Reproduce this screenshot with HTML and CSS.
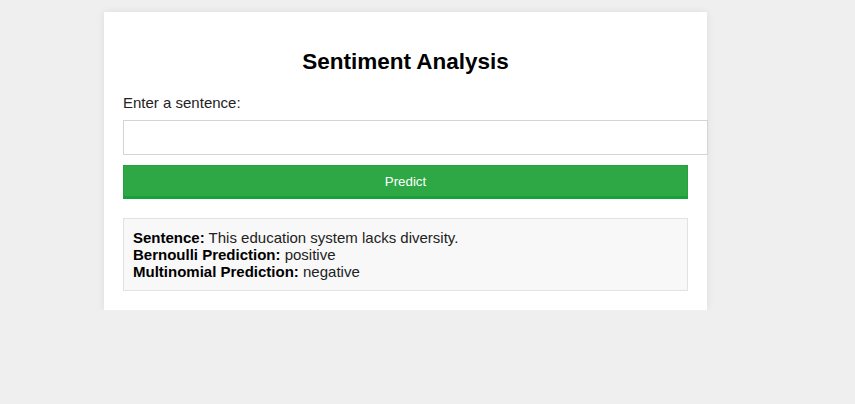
FILE: index.html
```html
<!DOCTYPE html>
<html lang="en">
<head>
<meta charset="utf-8">
<title>Sentiment Analysis</title>
<link rel="stylesheet" href="styles.css">
</head>
<body>
<div class="page">
  <div class="card">
    <h2 class="title">Sentiment Analysis</h2>
    <form class="form">
      <label class="label" for="sentence">Enter a sentence:</label>
      <input class="input" type="text" id="sentence" name="sentence">
      <button class="btn" type="button">Predict</button>
    </form>
    <div class="result">
      <div><strong>Sentence:</strong> This education system lacks diversity.</div>
      <div><strong>Bernoulli Prediction:</strong> positive</div>
      <div><strong>Multinomial Prediction:</strong> negative</div>
    </div>
  </div>
</div>
</body>
</html>
```

FILE: styles.css
```css
html, body {
  margin: 0;
  padding: 0;
  background: #efefef;
  font-family: "Liberation Sans", Arial, sans-serif;
  font-size: 15px;
  color: #222;
}

.page {
  padding: 12px 0 0 104px;
}

.card {
  box-sizing: border-box;
  width: 603px;
  background: #fff;
  padding: 20px 19px 19px;
  box-shadow: 0 0 8px rgba(0, 0, 0, 0.08);
}

.title {
  font-size: 22.5px;
  font-weight: bold;
  text-align: center;
  color: #000;
  margin: 17px 0 19px;
}

.form {
  display: flex;
  flex-direction: column;
  align-items: flex-start;
}

.label {
  display: block;
  margin-bottom: 9px;
}

.input {
  width: 100%;
  box-sizing: content-box;
  padding: 0 9px;
  margin: 0;
  border: 1px solid #d4d4d4;
  font-family: "Liberation Sans", Arial, sans-serif;
  font-size: 13.33px;
  background: #fff;
  height: 33px;
}

.btn {
  box-sizing: border-box;
  width: 100%;
  height: 34px;
  margin-top: 10px;
  background: #2da845;
  color: #fff;
  border: 1px solid #25a13d;
  border-bottom: 3px solid #14a33a;
  font-family: "Liberation Sans", Arial, sans-serif;
  font-size: 13.33px;
  padding: 0;
}

.result {
  margin-top: 19px;
  background: #f8f8f8;
  border: 1px solid #e2e2e2;
  padding: 10px 9px;
  line-height: 17px;
}

.result strong {
  color: #000;
}
```
